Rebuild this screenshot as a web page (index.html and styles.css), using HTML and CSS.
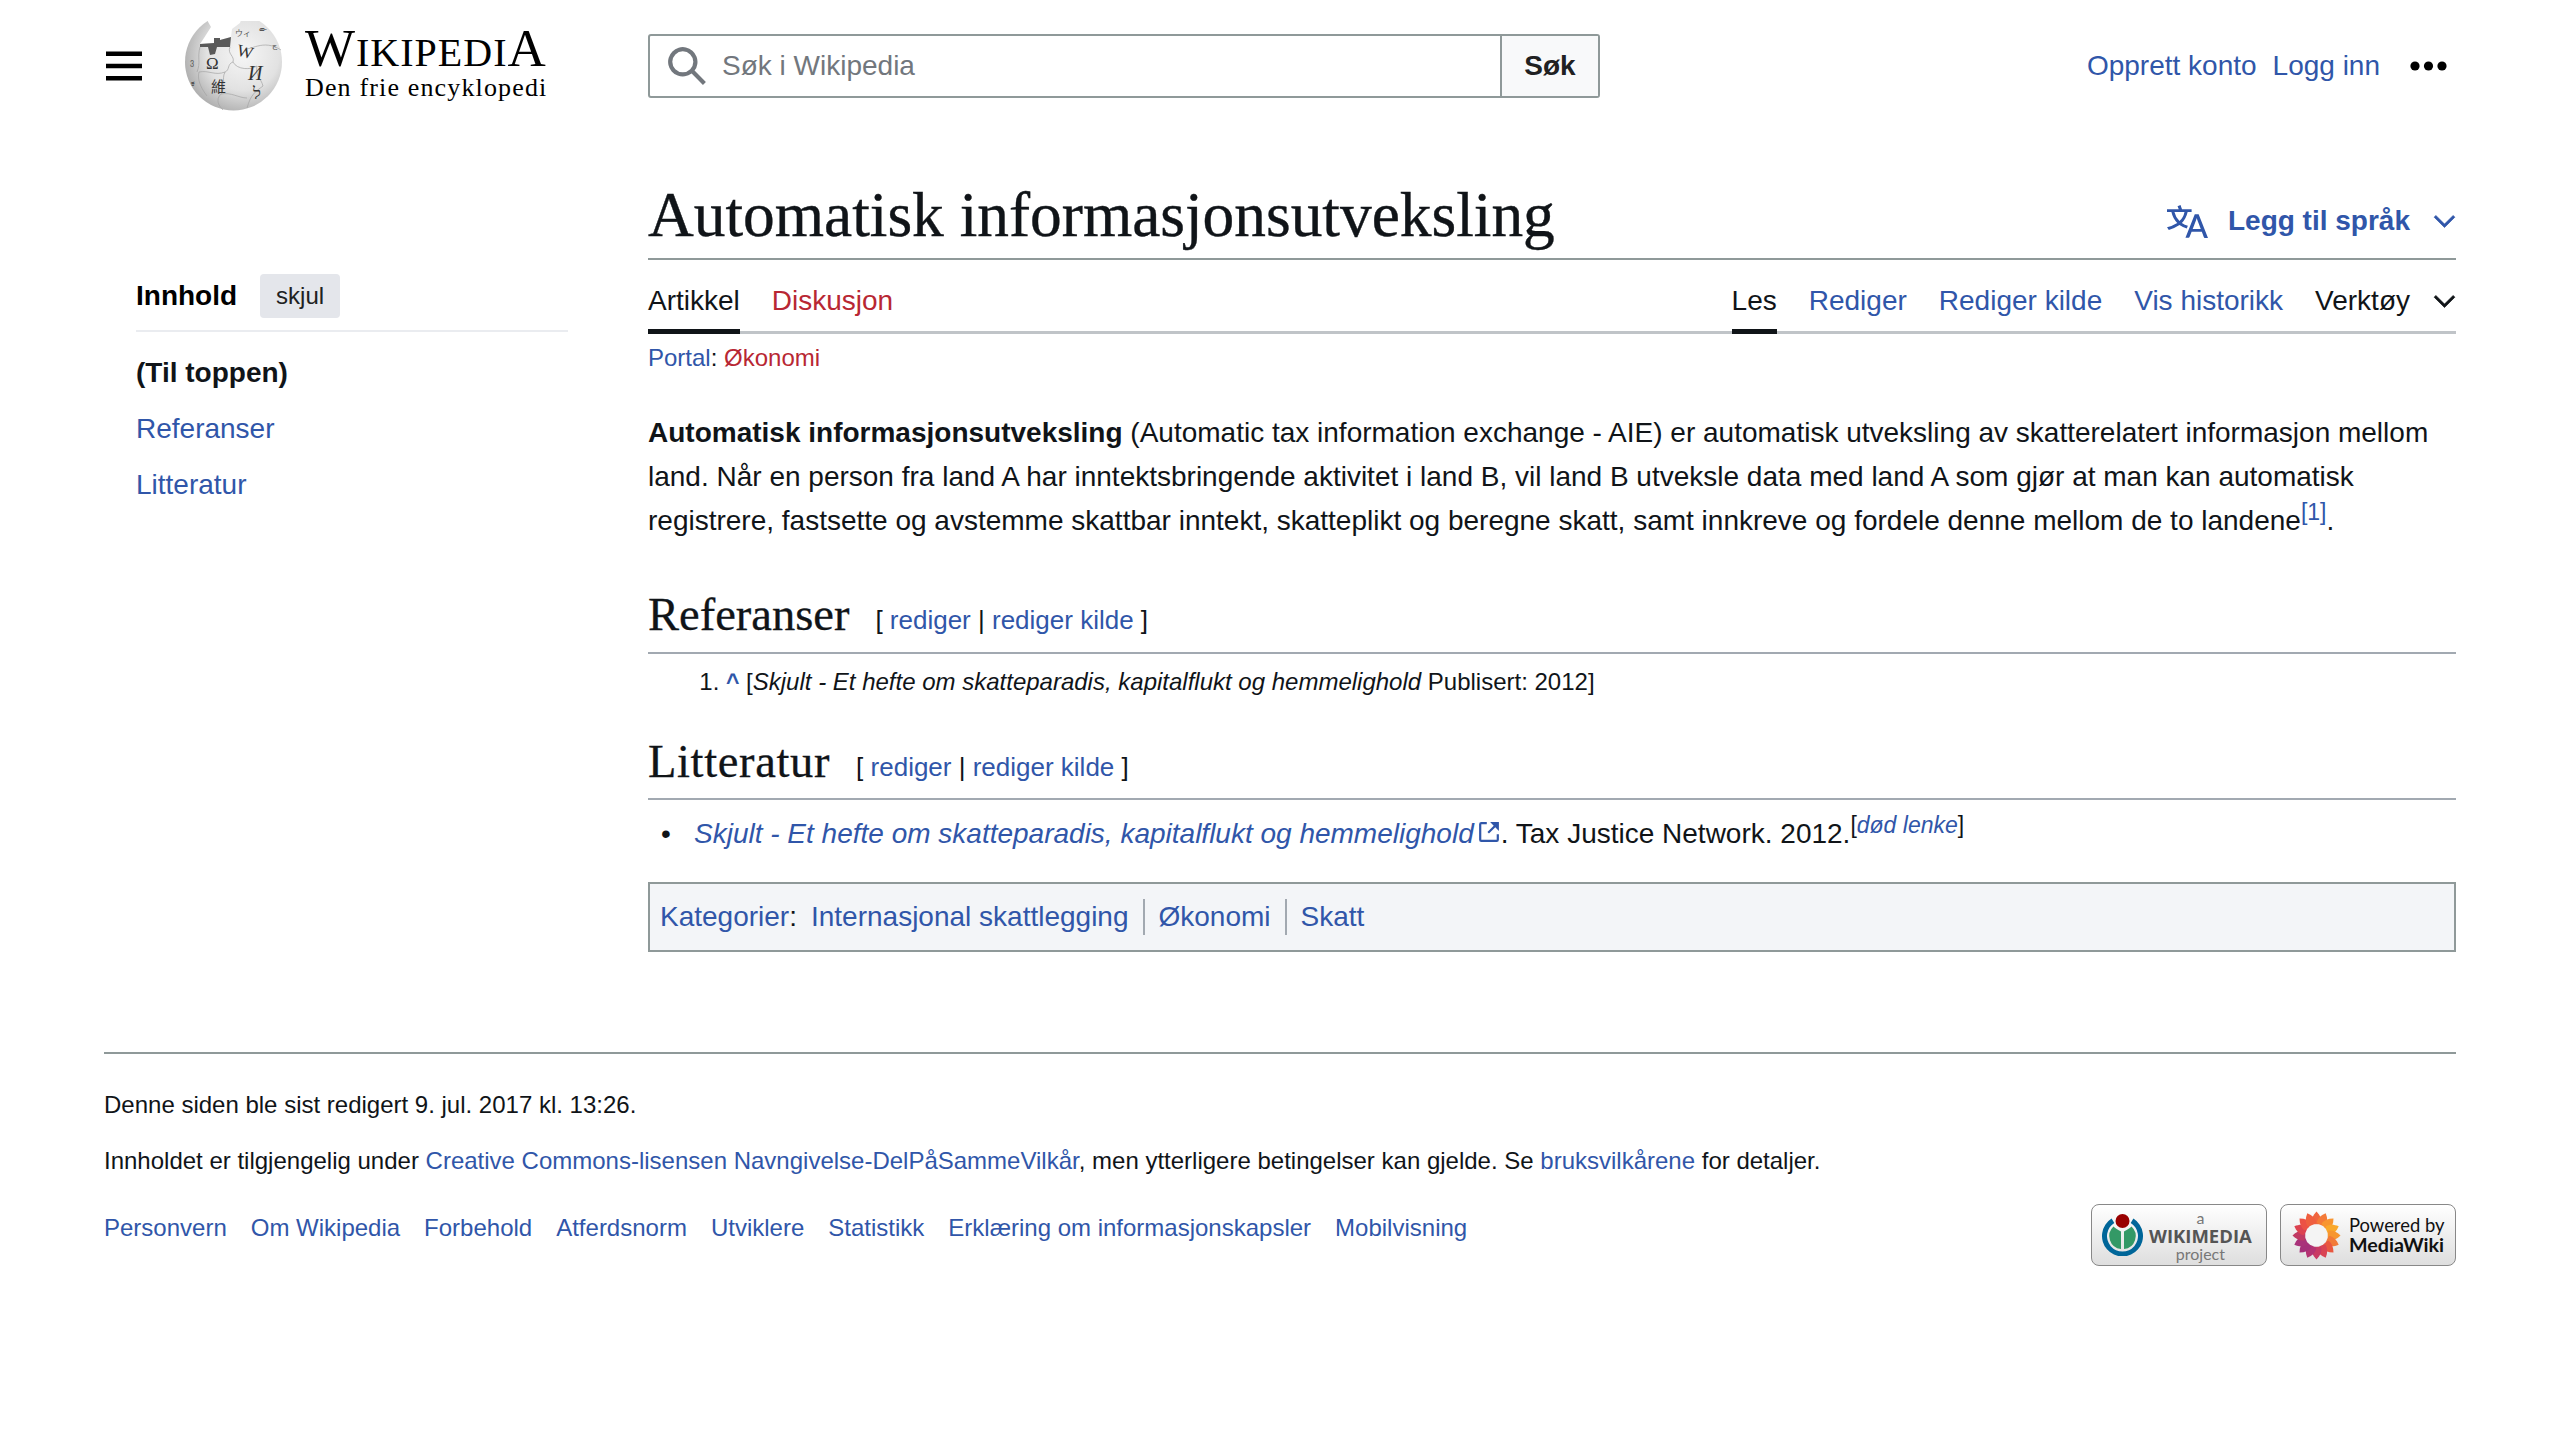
FILE: index.html
```html
<!DOCTYPE html>
<html lang="nb">
<head>
    <meta charset="UTF-8">
    <title>Automatisk informasjonsutveksling</title>
    <link rel="stylesheet" href="styles.css">
</head>
<body>
    <header class="site-header">
        <div class="header-start">
            <svg class="menu-icon" viewBox="0 0 36 30"><path d="M0 .5h36v4.4H0zM0 12.8h36v4.4H0zM0 25.1h36v4.4H0z"/></svg>
            <a href="#" class="logo">
                <svg class="globe" viewBox="0 0 98 92">
                    <defs>
                        <radialGradient id="globe-shade" cx="0.6" cy="0.42" r="0.68">
                            <stop offset="0" stop-color="#f6f6f6"/>
                            <stop offset="0.55" stop-color="#e2e2e2"/>
                            <stop offset="1" stop-color="#a4a4a4"/>
                        </radialGradient>
                        <clipPath id="globe-cap"><rect x="0" y="1" width="98" height="91"/></clipPath>
                    </defs>
                    <circle cx="48.5" cy="42" r="48.5" fill="url(#globe-shade)" clip-path="url(#globe-cap)"/>
                    <path d="M22 0L26 7 19 18 15 24 29 23 29 18 35 18 35 20 46 17 47 9 55 3 56 0z" fill="white"/>
                    <path d="M15 24L29 23 29 18 35 18 35 20 46 17 45 27 32 27 30 34 25 35 23 27 15 27z" fill="#5a5a5a"/>
                    <path class="globe-seams" d="M15 27C12 38 16 42 12 52M14 52C24 50 30 56 40 52 45 50 42 44 48 42M45 27C42 34 50 36 48 42 52 50 66 50 72 46M60 28C64 32 78 18 96 30M72 46C70 56 76 58 78 66 70 72 66 74 62 88M40 52C36 60 42 64 36 74 30 80 34 86 38 90M36 74C46 72 54 78 62 78M14 52C12 60 16 68 22 76"/>
                    <text x="21" y="49" class="globe-glyph">Ω</text>
                    <text x="52" y="37" class="globe-glyph" transform="rotate(14 59 32)">W</text>
                    <text x="63" y="60" class="globe-glyph globe-glyph-big">И</text>
                    <text x="26" y="72" class="globe-glyph globe-glyph-cjk">維</text>
                    <text x="68" y="79" class="globe-glyph">ל</text>
                    <text x="50" y="16" class="globe-glyph globe-glyph-small">ウィ</text>
                    <text x="74" y="12" class="globe-glyph globe-glyph-small">ው</text>
                    <text x="87" y="28" class="globe-glyph globe-glyph-small">ج</text>
                    <text x="5" y="45" class="globe-glyph globe-glyph-small">ვ</text>
                    <text x="6" y="66" class="globe-glyph globe-glyph-small">ಕ</text>
                </svg>
                <span class="wordmark">
                    <span class="wordmark-name">W<small>IKIPEDI</small>A</span>
                    <span class="wordmark-tagline">Den frie encyklopedi</span>
                </span>
            </a>
        </div>
        <form class="search">
            <div class="search-field">
                <svg class="search-icon" viewBox="0 0 20 20"><path d="M12.2 13.6a7 7 0 1 1 1.4-1.4l5.4 5.4-1.4 1.4zM3 8a5 5 0 1 0 10 0A5 5 0 0 0 3 8"/></svg>
                <span class="search-placeholder">Søk i Wikipedia</span>
            </div>
            <button type="button" class="search-btn">Søk</button>
        </form>
        <nav class="user-links">
            <a href="#">Opprett konto</a>
            <a href="#">Logg inn</a>
            <svg class="dots-icon" viewBox="0 0 37 12"><circle cx="5" cy="6" r="4.6"/><circle cx="18.5" cy="6" r="4.6"/><circle cx="32" cy="6" r="4.6"/></svg>
        </nav>
    </header>

    <div class="page">
        <aside class="toc">
            <div class="toc-head">
                <span class="toc-title">Innhold</span>
                <button type="button" class="toc-toggle">skjul</button>
            </div>
            <ul class="toc-list">
                <li class="toc-top">(Til toppen)</li>
                <li><a href="#referanser">Referanser</a></li>
                <li><a href="#litteratur">Litteratur</a></li>
            </ul>
        </aside>

        <main class="content">
            <div class="title-row">
                <h1>Automatisk informasjonsutveksling</h1>
                <a href="#" class="lang-btn">
                    <svg class="lang-icon" viewBox="0 0 20 20"><path d="M20 18h-1.44a.6.6 0 0 1-.4-.12.8.8 0 0 1-.23-.31L17 15h-5l-1 2.54a.8.8 0 0 1-.22.3.6.6 0 0 1-.4.14H9l4.55-11.47h1.89zm-3.53-4.31L14.89 9.5a12 12 0 0 1-.39-1.24q-.09.37-.19.69l-.19.56-1.58 4.19zm-6.3-1.58a13.4 13.4 0 0 1-2.91-1.41 11.46 11.46 0 0 0 2.81-5.37H12V4H7.31a4 4 0 0 0-.2-.56C6.87 2.79 6.6 2 6.6 2l-1.47.5s.4.89.6 1.5H0v1.33h2.15A11.23 11.23 0 0 0 5 10.7a17.2 17.2 0 0 1-5 2.1q.56.82.87 1.38a23.3 23.3 0 0 0 5.22-2.51 15.6 15.6 0 0 0 3.56 1.77zM3.63 5.33h4.91a8.1 8.1 0 0 1-2.45 4.45 9.1 9.1 0 0 1-2.46-4.45"/></svg>
                    <span>Legg til språk</span>
                    <svg class="chevron" viewBox="0 0 20 20"><path d="m17.5 4.75-7.5 7.5-7.5-7.5L1 6.25l9 9 9-9z"/></svg>
                </a>
            </div>

            <nav class="tabs">
                <div class="tab-group">
                    <a href="#" class="tab active">Artikkel</a>
                    <a href="#" class="tab new">Diskusjon</a>
                </div>
                <div class="tab-group">
                    <a href="#" class="tab active">Les</a>
                    <a href="#" class="tab">Rediger</a>
                    <a href="#" class="tab">Rediger kilde</a>
                    <a href="#" class="tab">Vis historikk</a>
                    <a href="#" class="tab tools">Verktøy
                        <svg class="chevron" viewBox="0 0 20 20"><path d="m17.5 4.75-7.5 7.5-7.5-7.5L1 6.25l9 9 9-9z"/></svg>
                    </a>
                </div>
            </nav>

            <div class="hatnote"><a href="#">Portal</a>: <a href="#" class="new">Økonomi</a></div>

            <p class="lead"><b>Automatisk informasjonsutveksling</b> (Automatic tax information exchange - AIE) er automatisk utveksling av skatterelatert informasjon mellom land. Når en person fra land A har inntektsbringende aktivitet i land B, vil land B utveksle data med land A som gjør at man kan automatisk registrere, fastsette og avstemme skattbar inntekt, skatteplikt og beregne skatt, samt innkreve og fordele denne mellom de to landene<sup><a href="#">[1]</a></sup>.</p>

            <h2 id="referanser">Referanser<span class="edit-links">[ <a href="#">rediger</a> | <a href="#">rediger kilde</a> ]</span></h2>
            <ol class="references">
                <li><a href="#" class="ref-up">^</a> [<i>Skjult - Et hefte om skatteparadis, kapitalflukt og hemmelighold</i> Publisert: 2012]</li>
            </ol>

            <h2 id="litteratur">Litteratur<span class="edit-links">[ <a href="#">rediger</a> | <a href="#">rediger kilde</a> ]</span></h2>
            <ul class="sources">
                <li><a href="#"><i>Skjult - Et hefte om skatteparadis, kapitalflukt og hemmelighold</i><svg class="ext-icon" viewBox="0 0 20 20"><path d="M17 17H3V3h5V1H3a2 2 0 0 0-2 2v14a2 2 0 0 0 2 2h14a2 2 0 0 0 2-2v-5h-2z"/><path d="m11 1 3.29 3.29-5.73 5.73 1.42 1.42 5.73-5.73L19 9V1z"/></svg></a>. Tax Justice Network. 2012.<sup>[<a href="#"><i>død lenke</i></a>]</sup></li>
            </ul>

            <div class="categories">
                <a href="#">Kategorier</a>:
                <ul>
                    <li><a href="#">Internasjonal skattlegging</a></li>
                    <li><a href="#">Økonomi</a></li>
                    <li><a href="#">Skatt</a></li>
                </ul>
            </div>
        </main>
    </div>

    <footer class="site-footer">
        <p>Denne siden ble sist redigert 9. jul. 2017 kl. 13:26.</p>
        <p>Innholdet er tilgjengelig under <a href="#">Creative Commons-lisensen Navngivelse-DelPåSammeVilkår</a>, men ytterligere betingelser kan gjelde. Se <a href="#">bruksvilkårene</a> for detaljer.</p>
        <div class="footer-bottom">
            <ul class="footer-links">
                <li><a href="#">Personvern</a></li>
                <li><a href="#">Om Wikipedia</a></li>
                <li><a href="#">Forbehold</a></li>
                <li><a href="#">Atferdsnorm</a></li>
                <li><a href="#">Utviklere</a></li>
                <li><a href="#">Statistikk</a></li>
                <li><a href="#">Erklæring om informasjonskapsler</a></li>
                <li><a href="#">Mobilvisning</a></li>
            </ul>
            <div class="badges">
                <a href="#" class="badge">
                    <svg class="wm-logo" viewBox="0 0 41 42">
                        <circle cx="20.5" cy="7" r="7" fill="#990000"/>
                        <path d="M19 17.5C16 16 13 14 11.5 12.5A13 13 0 0 0 19 35z" fill="#339966"/>
                        <path d="M22 17.5C25 16 28 14 29.5 12.5A13 13 0 0 1 22 35z" fill="#339966"/>
                        <path d="M9.6 4.6A20.5 20.5 0 1 0 31.4 4.6L28.7 8.9A15.5 15.5 0 1 1 12.3 8.9z" fill="#006699"/>
                    </svg>
                    <span class="badge-text wm-text">
                        <span class="wm-small">a</span>
                        <span class="wm-name">WIKIMEDIA</span>
                        <span class="wm-small">project</span>
                    </span>
                </a>
                <a href="#" class="badge">
                    <svg class="mw-logo" viewBox="-25 -25 50 50">
                        <defs>
                            <path id="petal" d="M0-24.5c4 4 5.5 8 5 12-1.5 1.5-8.5 1.5-10 0-.5-4 1-8 5-12z"/>
                        </defs>
                        <use href="#petal" fill="#f0653f"/>
                        <use href="#petal" fill="#f47a38" transform="rotate(22.5)"/>
                        <use href="#petal" fill="#f89530" transform="rotate(45)"/>
                        <use href="#petal" fill="#f9a82b" transform="rotate(67.5)"/>
                        <use href="#petal" fill="#f7962f" transform="rotate(90)"/>
                        <use href="#petal" fill="#f27a38" transform="rotate(112.5)"/>
                        <use href="#petal" fill="#e9573f" transform="rotate(135)"/>
                        <use href="#petal" fill="#d94453" transform="rotate(157.5)"/>
                        <use href="#petal" fill="#c93a63" transform="rotate(180)"/>
                        <use href="#petal" fill="#b43372" transform="rotate(202.5)"/>
                        <use href="#petal" fill="#a5307a" transform="rotate(225)"/>
                        <use href="#petal" fill="#a9327a" transform="rotate(247.5)"/>
                        <use href="#petal" fill="#c03a63" transform="rotate(270)"/>
                        <use href="#petal" fill="#dc4250" transform="rotate(292.5)"/>
                        <use href="#petal" fill="#ec5145" transform="rotate(315)"/>
                        <use href="#petal" fill="#ef5f3f" transform="rotate(337.5)"/>
                        <circle r="11" fill="#f4f4f4"/>
                    </svg>
                    <span class="badge-text mw-text">
                        <span>Powered by</span>
                        <b>MediaWiki</b>
                    </span>
                </a>
            </div>
        </div>
    </footer>
</body>
</html>
```

FILE: styles.css
```css
body {
    margin: 0;
    background-color: white;
    color: #101418;
    font-family: 'Liberation Sans', Arial, sans-serif;
    font-size: 28px;
    line-height: 44px;
}
a {
    color: #3056a9;
    text-decoration: none;
}
a.new, .tab.new {
    color: #b82733;
}
ul, ol {
    margin: 0;
    padding: 0;
    list-style: none;
}

/* header */
.site-header {
    display: flex;
    align-items: center;
    height: 131px;
    padding: 0 104px;
}
.header-start {
    display: flex;
    align-items: center;
    width: 544px;
    flex: none;
}
.menu-icon {
    width: 36px;
    height: 30px;
    margin-left: 2px;
    fill: black;
}
.logo {
    display: flex;
    align-items: center;
    margin-left: 43px;
    color: black;
}
.globe {
    width: 98px;
    height: 92px;
}
.globe-seams {
    fill: none;
    stroke: #a4a4a4;
    stroke-width: 0.7;
}
.globe-glyph {
    font-family: 'Liberation Serif', serif;
    font-size: 17px;
    fill: #333;
}
.globe-glyph-big {
    font-size: 20px;
    font-style: italic;
}
.globe-glyph-cjk {
    font-family: 'Noto Sans CJK TC', sans-serif;
    font-size: 15px;
}
.globe-glyph-small {
    font-family: 'Noto Sans CJK JP', 'DejaVu Sans', sans-serif;
    font-size: 8px;
    fill: #555;
}
.wordmark {
    display: flex;
    flex-direction: column;
    margin: 0 0 4px 22px;
    font-family: 'Liberation Serif', serif;
}
.wordmark-name {
    font-size: 53px;
    line-height: 44px;
    letter-spacing: 1px;
    white-space: nowrap;
}
.wordmark-name small {
    font-size: 40px;
}
.wordmark-tagline {
    font-size: 26px;
    line-height: 26px;
    letter-spacing: 1.15px;
    white-space: nowrap;
}
.search {
    display: flex;
    width: 952px;
    height: 64px;
    box-sizing: border-box;
    border: 2px solid #8f9999;
    border-radius: 3px;
}
.search-field {
    flex: 1;
    display: flex;
    align-items: center;
    padding-left: 16px;
}
.search-icon {
    width: 42px;
    height: 42px;
    fill: #72777d;
}
.search-placeholder {
    margin-left: 14px;
    color: #72777d;
}
.search-btn {
    width: 98px;
    border: none;
    border-left: 2px solid #8f9999;
    background-color: #f8f9fa;
    color: #202122;
    font-family: inherit;
    font-size: 28px;
    font-weight: bold;
}
.user-links {
    flex: 1;
    display: flex;
    align-items: center;
    justify-content: flex-end;
    gap: 16px;
}
.dots-icon {
    width: 37px;
    height: 12px;
    margin-left: 14px;
    margin-right: 9px;
}

/* page */
.page {
    display: grid;
    grid-template-columns: 544px 1fr;
    padding: 0 104px;
}
.toc {
    padding: 143px 80px 0 32px;
}
.toc-head {
    display: flex;
    align-items: center;
    gap: 23px;
    padding-bottom: 12px;
    border-bottom: 2px solid #eaecf0;
}
.toc-title {
    font-weight: bold;
    color: black;
}
.toc-toggle {
    width: 80px;
    height: 44px;
    padding: 0;
    border: none;
    border-radius: 4px;
    background-color: #e4e6eb;
    color: #202122;
    font-family: inherit;
    font-size: 24px;
}
.toc-list {
    margin-top: 19px;
}
.toc-list li {
    margin-bottom: 12px;
}
.toc-top {
    font-weight: bold;
}
.content {
    min-width: 0;
}
.title-row {
    display: flex;
    justify-content: space-between;
    align-items: flex-end;
    height: 127px;
    border-bottom: 2px solid #8f9999;
}
h1 {
    margin: 0 0 3px;
    font-family: 'Liberation Serif', serif;
    font-size: 63.4px;
    font-weight: normal;
    line-height: 80px;
    -webkit-text-stroke: 0.4px;
}
.lang-btn {
    display: flex;
    align-items: center;
    margin-bottom: 15px;
    font-weight: bold;
}
.lang-icon {
    width: 41px;
    height: 41px;
    fill: #3056a9;
    margin-right: 20px;
}
.chevron {
    width: 23px;
    height: 23px;
    margin-left: 23px;
    fill: currentColor;
    stroke: currentColor;
    stroke-width: 0.6;
}
.tabs {
    display: flex;
    justify-content: space-between;
    height: 74px;
    box-sizing: border-box;
    border-bottom: 3px solid #c0c4c8;
}
.tab-group {
    display: flex;
    gap: 32px;
}
.tab {
    display: flex;
    align-items: center;
    height: 74px;
    box-sizing: border-box;
    padding-top: 8px;
}
.tab.active {
    color: #101418;
    box-shadow: inset 0 -5px 0 #101418;
}
.tab.tools {
    color: #101418;
}
.hatnote {
    font-size: 24px;
    line-height: 36px;
    margin-top: 6px;
}
.lead {
    margin: 35px 0 0;
}
sup {
    font-size: 23px;
    line-height: 0;
}
h2 {
    margin: 41px 0 0;
    padding-bottom: 1px;
    border-bottom: 2px solid #a2a9b1;
    font-family: 'Liberation Serif', serif;
    font-size: 46.5px;
    font-weight: normal;
    line-height: 62px;
    -webkit-text-stroke: 0.3px;
}
.edit-links {
    margin-left: 26px;
    font-family: 'Liberation Sans', Arial, sans-serif;
    font-size: 26px;
    letter-spacing: 0;
    vertical-align: 1px;
    -webkit-text-stroke: 0;
}
.references {
    margin: 6px 0 0 78px;
    font-size: 24px;
    list-style: decimal;
}
.ref-up {
    font-weight: bold;
    font-size: 23px;
}
#litteratur {
    margin-top: 27px;
    padding-bottom: 0;
    letter-spacing: 0.65px;
}
.sources {
    margin: 12px 0 0 46px;
}
.sources li::before {
    content: "•";
    display: inline-block;
    width: 33px;
    margin-left: -33px;
}
.ext-icon {
    width: 22px;
    height: 22px;
    margin-left: 4px;
    margin-right: 1px;
    fill: #3056a9;
}
.categories {
    display: flex;
    align-items: center;
    height: 70px;
    box-sizing: border-box;
    margin-top: 26px;
    padding: 0 10px;
    border: 2px solid #8f9999;
    background-color: #f3f5f8;
}
.categories ul {
    display: flex;
    margin-left: 14px;
}
.categories li {
    padding: 0 14px;
    line-height: 36px;
    border-left: 2px solid #a2a9b1;
}
.categories li:first-child {
    padding-left: 0;
    border-left: none;
}

/* footer */
.site-footer {
    margin: 100px 104px 0;
    padding-top: 29px;
    border-top: 2px solid #8f9999;
    font-size: 24px;
}
.site-footer p {
    margin: 0 0 12px;
}
.footer-bottom {
    display: flex;
    justify-content: space-between;
    align-items: flex-start;
}
.footer-links {
    display: flex;
    gap: 24px;
    padding-top: 11px;
}
.badges {
    display: flex;
    gap: 13px;
    margin-top: 9px;
}
.badge {
    display: flex;
    align-items: center;
    width: 176px;
    height: 62px;
    box-sizing: border-box;
    border: 1px solid #888;
    border-radius: 8px;
    background: linear-gradient(#ffffff, #dedede);
    color: #111;
}
.wm-logo {
    width: 41px;
    height: 42px;
    margin-left: 10px;
}
.mw-logo {
    width: 49px;
    height: 49px;
    margin-left: 11px;
}
.badge-text {
    display: flex;
    flex-direction: column;
}
.wm-text {
    align-items: center;
    margin-left: 6px;
    color: #777;
    font-family: 'Lato', sans-serif;
}
.wm-small {
    font-size: 16px;
    line-height: 17px;
}
.wm-name {
    color: #555;
    font-family: 'Open Sans', sans-serif;
    font-size: 18.5px;
    font-weight: bold;
    line-height: 19px;
}
.mw-text {
    margin-left: 8px;
    font-family: 'Lato', sans-serif;
    font-size: 18.4px;
    line-height: 20px;
}
.mw-text b {
    font-weight: bold;
    font-size: 19.7px;
}
```
